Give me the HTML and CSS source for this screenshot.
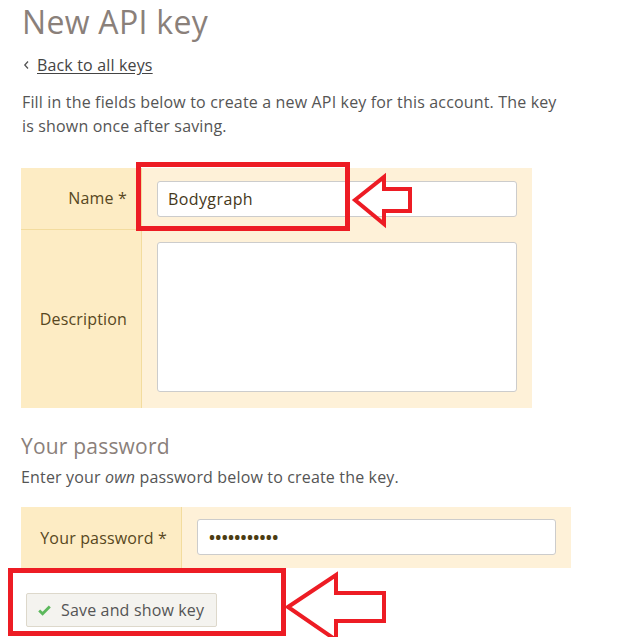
FILE: index.html
```html
<!DOCTYPE html>
<html lang="en">
<head>
<meta charset="utf-8">
<title>New API key</title>
<link rel="stylesheet" href="styles.css">
</head>
<body>
<main class="page">
  <h1 class="title">New API key</h1>
  <div class="back">
    <svg class="chev" width="7" height="10" viewBox="0 0 7 10"><path d="M5 1.5 L1.8 5 L5 8.5" fill="none" stroke="#555" stroke-width="1.3"/></svg>
    <a href="#" class="back-link">Back to all keys</a>
  </div>
  <p class="intro">Fill in the fields below to create a new API key for this account. The key is shown once after saving.</p>

  <div class="form-table form-main">
    <div class="lbl lbl-first">Name *</div>
    <div class="cell"><input class="field" type="text" value="Bodygraph"></div>
    <div class="lbl">Description</div>
    <div class="cell cell-area"><textarea class="area"></textarea></div>
  </div>

  <h2 class="subtitle">Your password</h2>
  <p class="note">Enter your <em>own</em> password below to create the key.</p>

  <div class="form-table form-pass">
    <div class="lbl">Your password *</div>
    <div class="cell cell-pass"><div class="field dots">•••••••••••</div></div>
  </div>

  <button class="btn" type="button">
    <svg class="check" width="13" height="11" viewBox="0 0 13 11"><path d="M1.2 5.6 L4.6 8.8 L11.8 1.4" fill="none" stroke="#5cb85c" stroke-width="2.8" stroke-linejoin="miter"/></svg>
    <span>Save and show key</span>
  </button>
</main>

<svg class="annot" width="632" height="637" viewBox="0 0 632 637">
  <rect x="138.5" y="164.5" width="209" height="64" fill="none" stroke="#ed1c24" stroke-width="5"/>
  <polygon points="355,200 384,177 384,189 410,189 410,211 384,211 384,224" fill="none" stroke="#ed1c24" stroke-width="4" stroke-linejoin="miter"/>
  <rect x="10.5" y="570.5" width="273" height="63" fill="none" stroke="#ed1c24" stroke-width="5"/>
  <polygon points="288,607 336,575 336,593 384,593 384,621 336,621 336,640" fill="none" stroke="#ed1c24" stroke-width="4" stroke-linejoin="miter"/>
</svg>
</body>
</html>
```

FILE: styles.css
```css
html, body {
  margin: 0;
  padding: 0;
  overflow: hidden;
}
body {
  position: relative;
  width: 632px;
  height: 637px;
  font-family: "Open Sans", "Liberation Sans", sans-serif;
  font-size: 16px;
  letter-spacing: 0.16px;
  color: #555;
  background: #fff;
}
.page {
  padding: 0 21px;
  display: flex;
  flex-direction: column;
  align-items: flex-start;
}
.title {
  margin: 0;
  padding-top: 2px;
  padding-left: 1px;
  font-size: 32px;
  line-height: 40px;
  font-weight: 400;
  letter-spacing: 0.3px;
  color: #8a807a;
}
.back {
  margin-top: 11px;
  display: flex;
  align-items: center;
  height: 24px;
  line-height: 24px;
  padding-left: 2px;
}
.chev {
  display: block;
  margin-right: 7px;
}
.back-link {
  color: #444;
  text-decoration: underline;
  text-underline-offset: 2px;
}
.intro {
  margin: 13px 0 0;
  line-height: 24px;
  padding-left: 1px;
  width: 545px;
}
.form-table {
  display: grid;
}
.form-main {
  margin-top: 30px;
  grid-template-columns: 121px 390px;
}
.form-pass {
  margin-top: 18px;
  grid-template-columns: 161px 389px;
}
.lbl {
  background: #fdecc4;
  border-right: 1px solid #f3dc9e;
  display: flex;
  align-items: center;
  justify-content: flex-end;
  padding-right: 14px;
  color: #574721;
}
.lbl-first {
  border-bottom: 1px solid #f3dc9e;
  padding-bottom: 2px;
}
.cell {
  background: #fef1d8;
  padding: 13px 15px;
}
.cell-area {
  padding: 12px 15px 16px;
}
.cell-pass {
  padding: 12px 15px 13px;
}
.field {
  box-sizing: border-box;
  display: block;
  width: 360px;
  height: 36px;
  margin: 0;
  border: 1px solid #ccc;
  border-radius: 3px;
  background: #fff;
  padding: 0 10px;
  font-family: "Open Sans", "Liberation Sans", sans-serif;
  font-size: 16px;
  letter-spacing: 0.4px;
  color: #45381a;
  outline: none;
}
.cell-pass .field {
  width: 359px;
}
.dots {
  line-height: 34px;
  padding-left: 11px;
  letter-spacing: 0.3px;
  font-size: 16px;
  font-weight: 700;
  color: #4b3c12;
}
.area {
  box-sizing: border-box;
  display: block;
  width: 360px;
  height: 150px;
  margin: 0;
  border: 1px solid #ccc;
  border-radius: 3px;
  background: #fff;
  resize: none;
  outline: none;
}
.subtitle {
  margin: 24px 0 0;
  font-size: 21px;
  line-height: 28px;
  font-weight: 400;
  letter-spacing: 0.2px;
  color: #8a807a;
}
.note {
  margin: 5px 0 0;
  line-height: 24px;
}
.btn {
  margin: 25px 0 0 5px;
  box-sizing: border-box;
  height: 34px;
  width: 191px;
  display: flex;
  align-items: center;
  padding: 0 0 0 11px;
  background: #f4f3ef;
  border: 1px solid #ddd8cb;
  border-radius: 2px;
  font-family: "Open Sans", "Liberation Sans", sans-serif;
  font-size: 16px;
  letter-spacing: 0.16px;
  color: #555;
}
.check {
  display: block;
  margin-right: 10px;
}
.annot {
  position: absolute;
  left: 0;
  top: 0;
  pointer-events: none;
}
```
